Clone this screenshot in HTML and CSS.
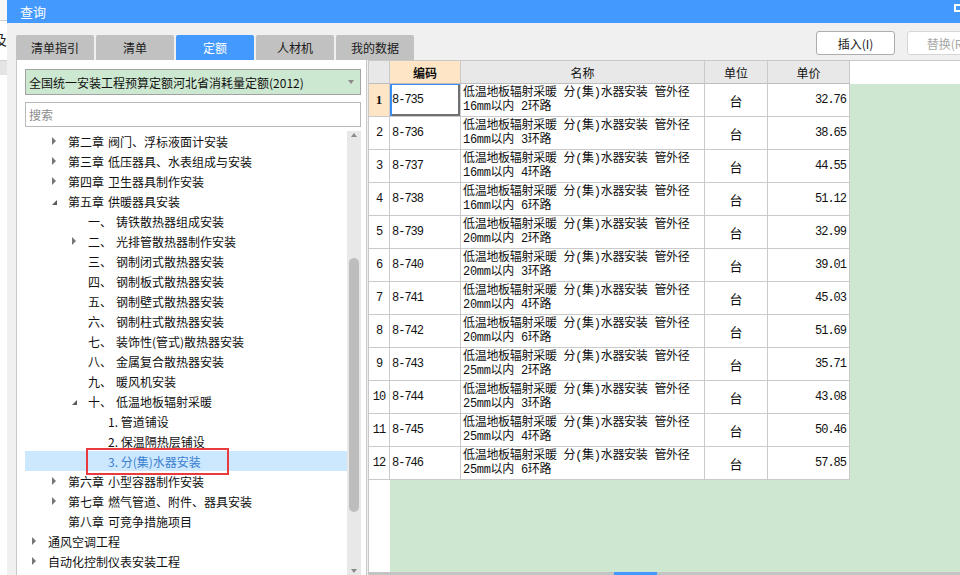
FILE: index.html
```html
<!DOCTYPE html>
<html lang="zh-CN">
<head>
<meta charset="utf-8">
<title>查询</title>
<link rel="stylesheet" href="styles.css">
</head>
<body>
<div class="screen">
  <div class="backapp">
    <div class="ba-top"></div>
    <div class="ba-row"><span class="ba-char">及</span></div>
    <div class="ba-gray"></div>
  </div>
  <div class="dialog">
    <div class="titlebar"><span class="title">查询</span><span class="max-icon"></span></div>
    <div class="toolbar">
      <div class="tabs">
        <div class="tab">清单指引</div>
        <div class="tab">清单</div>
        <div class="tab active">定额</div>
        <div class="tab">人材机</div>
        <div class="tab">我的数据</div>
      </div>
      <div class="actions">
        <button class="btn">插入(I)</button>
        <button class="btn disabled">替换(R)</button>
      </div>
    </div>
    <div class="main">
      <div class="left-panel">
        <div class="combo"><span>全国统一安装工程预算定额河北省消耗量定额(2012)</span><span class="combo-arrow"></span></div>
        <div class="search">搜索</div>
        <div class="tree-wrap">
          <ul class="tree">
            <li class="node l2"><span class="tw closed"></span><span class="chap">第二章</span>阀门、浮标液面计安装</li>
            <li class="node l2"><span class="tw closed"></span><span class="chap">第三章</span>低压器具、水表组成与安装</li>
            <li class="node l2"><span class="tw closed"></span><span class="chap">第四章</span>卫生器具制作安装</li>
            <li class="node l2"><span class="tw open"></span><span class="chap">第五章</span>供暖器具安装</li>
            <li class="node l3"><span class="tw"></span><span class="num">一、</span>铸铁散热器组成安装</li>
            <li class="node l3"><span class="tw closed"></span><span class="num">二、</span>光排管散热器制作安装</li>
            <li class="node l3"><span class="tw"></span><span class="num">三、</span>钢制闭式散热器安装</li>
            <li class="node l3"><span class="tw"></span><span class="num">四、</span>钢制板式散热器安装</li>
            <li class="node l3"><span class="tw"></span><span class="num">五、</span>钢制壁式散热器安装</li>
            <li class="node l3"><span class="tw"></span><span class="num">六、</span>钢制柱式散热器安装</li>
            <li class="node l3"><span class="tw"></span><span class="num">七、</span>装饰性(管式)散热器安装</li>
            <li class="node l3"><span class="tw"></span><span class="num">八、</span>金属复合散热器安装</li>
            <li class="node l3"><span class="tw"></span><span class="num">九、</span>暖风机安装</li>
            <li class="node l3"><span class="tw open"></span><span class="num">十、</span>低温地板辐射采暖</li>
            <li class="node l4"><span class="tw"></span>1. 管道铺设</li>
            <li class="node l4"><span class="tw"></span>2. 保温隔热层铺设</li>
            <li class="node l4 selected"><span class="tw"></span>3. 分(集)水器安装<span class="mark"></span></li>
            <li class="node l2"><span class="tw closed"></span><span class="chap">第六章</span>小型容器制作安装</li>
            <li class="node l2"><span class="tw closed"></span><span class="chap">第七章</span>燃气管道、附件、器具安装</li>
            <li class="node l2"><span class="tw"></span><span class="chap">第八章</span>可竞争措施项目</li>
            <li class="node l1"><span class="tw closed"></span>通风空调工程</li>
            <li class="node l1"><span class="tw closed"></span>自动化控制仪表安装工程</li>
          </ul>
          <div class="vscroll"><span class="up"></span><span class="thumb"></span><span class="down"></span></div>
        </div>
      </div>
      <div class="right-panel">
        <div class="grid-view">
          <div class="grid">
            <div class="h"></div><div class="h key">编码</div><div class="h">名称</div><div class="h">单位</div><div class="h">单价</div>

            <div class="rn cur">1</div><div class="code focus">8-735</div><div class="name">低温地板辐射采暖 分(集)水器安装 管外径<br>16mm以内 2环路</div><div class="unit">台</div><div class="price">32.76</div>
            <div class="rn">2</div><div class="code">8-736</div><div class="name">低温地板辐射采暖 分(集)水器安装 管外径<br>16mm以内 3环路</div><div class="unit">台</div><div class="price">38.65</div>
            <div class="rn">3</div><div class="code">8-737</div><div class="name">低温地板辐射采暖 分(集)水器安装 管外径<br>16mm以内 4环路</div><div class="unit">台</div><div class="price">44.55</div>
            <div class="rn">4</div><div class="code">8-738</div><div class="name">低温地板辐射采暖 分(集)水器安装 管外径<br>16mm以内 6环路</div><div class="unit">台</div><div class="price">51.12</div>
            <div class="rn">5</div><div class="code">8-739</div><div class="name">低温地板辐射采暖 分(集)水器安装 管外径<br>20mm以内 2环路</div><div class="unit">台</div><div class="price">32.99</div>
            <div class="rn">6</div><div class="code">8-740</div><div class="name">低温地板辐射采暖 分(集)水器安装 管外径<br>20mm以内 3环路</div><div class="unit">台</div><div class="price">39.01</div>
            <div class="rn">7</div><div class="code">8-741</div><div class="name">低温地板辐射采暖 分(集)水器安装 管外径<br>20mm以内 4环路</div><div class="unit">台</div><div class="price">45.03</div>
            <div class="rn">8</div><div class="code">8-742</div><div class="name">低温地板辐射采暖 分(集)水器安装 管外径<br>20mm以内 6环路</div><div class="unit">台</div><div class="price">51.69</div>
            <div class="rn">9</div><div class="code">8-743</div><div class="name">低温地板辐射采暖 分(集)水器安装 管外径<br>25mm以内 2环路</div><div class="unit">台</div><div class="price">35.71</div>
            <div class="rn">10</div><div class="code">8-744</div><div class="name">低温地板辐射采暖 分(集)水器安装 管外径<br>25mm以内 3环路</div><div class="unit">台</div><div class="price">43.08</div>
            <div class="rn">11</div><div class="code">8-745</div><div class="name">低温地板辐射采暖 分(集)水器安装 管外径<br>25mm以内 4环路</div><div class="unit">台</div><div class="price">50.46</div>
            <div class="rn">12</div><div class="code">8-746</div><div class="name">低温地板辐射采暖 分(集)水器安装 管外径<br>25mm以内 6环路</div><div class="unit">台</div><div class="price">57.85</div>
          </div>
        </div>
        <div class="hbar"><span class="hbar-thumb"></span></div>
      </div>
    </div>
  </div>
</div>
</body>
</html>
```

FILE: styles.css
```css
html, body {
  margin: 0;
  padding: 0;
}
body {
  width: 960px;
  height: 575px;
  overflow: hidden;
  font-family: "Noto Sans CJK SC", sans-serif;
  font-size: 12px;
  color: #1b1b1b;
  background: #fff;
}
.screen {
  display: flex;
  height: 575px;
}

/* background application strip */
.backapp {
  width: 7px;
  flex: none;
  display: flex;
  flex-direction: column;
  background: #fff;
  overflow: hidden;
}
.ba-top {
  height: 20px;
  background: #f7f7f7;
  border-bottom: 1px solid #cfcfcf;
}
.ba-row {
  height: 39px;
  border-bottom: 1px solid #cfcfcf;
  overflow: hidden;
}
.ba-char {
  display: block;
  margin-left: -7px;
  margin-top: 9px;
  font-size: 14px;
  line-height: 18px;
  color: #222;
}
.ba-gray {
  height: 14px;
  background: #e4e4e4;
}

/* dialog */
.dialog {
  flex: 1;
  min-width: 0;
  display: flex;
  flex-direction: column;
  background: #f0f0f0;
}
.titlebar {
  height: 23px;
  flex: none;
  background: #4399fe;
  display: flex;
  align-items: center;
  justify-content: space-between;
  padding-left: 13px;
  color: #fff;
  font-size: 13px;
  overflow: hidden;
}
.max-icon {
  width: 10px;
  height: 4px;
  border: 2px solid #fff;
  margin-right: -8px;
  align-self: flex-start;
  margin-top: 4px;
}
.toolbar {
  height: 37px;
  flex: none;
  display: flex;
  padding-left: 9px;
}
.tabs {
  display: flex;
  gap: 2px;
  align-self: flex-end;
}
.tab {
  width: 78px;
  height: 25px;
  background: #c1c1c1;
  display: flex;
  align-items: center;
  justify-content: center;
  border-radius: 2px 2px 0 0;
  color: #1a1a1a;
}
.tab.active {
  background: #4399fe;
  color: #fff;
}
.actions {
  margin-left: auto;
  margin-right: -26px;
  margin-top: 8px;
  display: flex;
  gap: 12px;
  align-self: flex-start;
}
.btn {
  width: 79px;
  height: 24px;
  box-sizing: border-box;
  border: 1px solid #adadad;
  border-radius: 3px;
  background: #fff;
  font: 12px "Noto Sans CJK SC", sans-serif;
  color: #1a1a1a;
  padding: 0;
}
.btn.disabled {
  color: #a8a8a8;
  border-color: #d6d6d6;
}

/* main area */
.main {
  flex: 1;
  min-height: 0;
  display: flex;
  padding-left: 9px;
  gap: 1px;
}
.left-panel {
  width: 351px;
  flex: none;
  box-sizing: border-box;
  background: #fff;
  border-left: 1px solid #c8c8c8;
  border-right: 1px solid #c8c8c8;
  padding: 9px 5px 0 8px;
  display: flex;
  flex-direction: column;
}
.combo {
  height: 26px;
  flex: none;
  box-sizing: border-box;
  border: 1px solid #a3a3a3;
  background: #cde8d0;
  display: flex;
  align-items: center;
  justify-content: space-between;
  padding: 0 6px 0 3px;
  color: #111;
}
.combo-arrow {
  border-top: 4px solid #8a8a8a;
  border-left: 3px solid transparent;
  border-right: 3px solid transparent;
}
.search {
  margin-top: 7px;
  height: 25px;
  flex: none;
  box-sizing: border-box;
  border: 1px solid #b9b9b9;
  padding-left: 3px;
  color: #8c8c8c;
  display: flex;
  align-items: center;
}
.tree-wrap {
  margin-top: 4px;
  flex: 1;
  min-height: 0;
  display: flex;
}
.tree {
  list-style: none;
  margin: 0;
  padding: 0;
  flex: 1;
}
.node {
  height: 20px;
  display: flex;
  align-items: center;
  position: relative;
  white-space: nowrap;
  color: #111;
}
.l1 { padding-left: 3px; }
.l2 { padding-left: 23px; }
.l3 { padding-left: 43px; }
.l4 { padding-left: 63px; }
.tw {
  width: 20px;
  height: 20px;
  flex: none;
  display: flex;
  align-items: center;
}
.tw.closed::before {
  content: "";
  margin-left: 4px;
  border-left: 4px solid #777;
  border-top: 4px solid transparent;
  border-bottom: 4px solid transparent;
}
.tw.open::before {
  content: "";
  margin-left: 4px;
  margin-top: 2px;
  border-bottom: 5px solid #5a5a5a;
  border-left: 5px solid transparent;
}
.chap { margin-right: 4px; }
.num {
  display: inline-block;
  width: 28px;
}
.node.selected {
  background: #cce8ff;
  color: #3b7fd0;
}
.mark {
  position: absolute;
  left: 61px;
  top: -3px;
  width: 143px;
  height: 27px;
  box-sizing: border-box;
  border: 2px solid #e83a3f;
}
.vscroll {
  width: 14px;
  flex: none;
  background: #e8e8e8;
  display: flex;
  flex-direction: column;
  align-items: center;
}
.up {
  margin-top: 2px;
  border-bottom: 4px solid #8a8a8a;
  border-left: 3px solid transparent;
  border-right: 3px solid transparent;
}
.thumb {
  margin-top: 121px;
  width: 10px;
  height: 254px;
  border-radius: 5px;
  background: #bdbdbd;
}
.down {
  margin-top: auto;
  margin-bottom: 2px;
  border-top: 4px solid #8a8a8a;
  border-left: 3px solid transparent;
  border-right: 3px solid transparent;
}

/* right grid */
.right-panel {
  flex: 1;
  min-width: 0;
  display: flex;
  flex-direction: column;
  border-top: 1px solid #c8c8c8;
  background: #fff;
}
.grid-view {
  flex: 1;
  min-height: 0;
  border-left: 1px solid #c8c8c8;
  background: #fff linear-gradient(#cde7d0, #cde7d0) no-repeat 21px 23px / 100% 100%;
}
.grid {
  display: grid;
  grid-template-columns: 21px 71px 244px 63px 82px;
  grid-template-rows: 23px;
  grid-auto-rows: 33px;
  width: max-content;
}
.grid > div {
  box-sizing: border-box;
  border-right: 1px solid #cacaca;
  border-bottom: 1px solid #cacaca;
  background: #fff;
  display: flex;
  align-items: center;
  overflow: hidden;
  white-space: nowrap;
  color: #111;
}
.grid > .h {
  background: #e8e8e8;
  justify-content: center;
  border-bottom-color: #bdbdbd;
}
.grid > .h.key {
  background: #fde5c6;
  font-weight: bold;
}
.grid > .rn {
  justify-content: center;
  font-family: "Liberation Mono", monospace;
  letter-spacing: -1px;
}
.grid > .rn.cur {
  background: #fde5c6;
  font: bold 13px "Liberation Serif", serif;
  letter-spacing: 0;
}
.grid > .code {
  padding-left: 2px;
  font-family: "Liberation Mono", monospace;
  letter-spacing: -1px;
}
.grid > .code.focus {
  box-shadow: inset 2px 0 0 #3d8ef2, inset 0 1px 0 #3d8ef2, inset -2px -2px 0 #707070;
}
.grid > .name {
  display: block;
  padding: 2px 2px 0;
  line-height: 14px;
  letter-spacing: -0.3px;
  font-family: "Liberation Mono", "Noto Sans CJK SC", monospace;
}
.grid > .unit {
  justify-content: center;
  font-size: 13px;
}
.grid > .price {
  justify-content: flex-end;
  padding-right: 3px;
  font-family: "Liberation Mono", monospace;
  letter-spacing: -1px;
}
.hbar {
  height: 3px;
  flex: none;
  background: #c4c4c4;
  display: flex;
}
.hbar-thumb {
  margin-left: 246px;
  width: 43px;
  background: #4399fe;
}
```
